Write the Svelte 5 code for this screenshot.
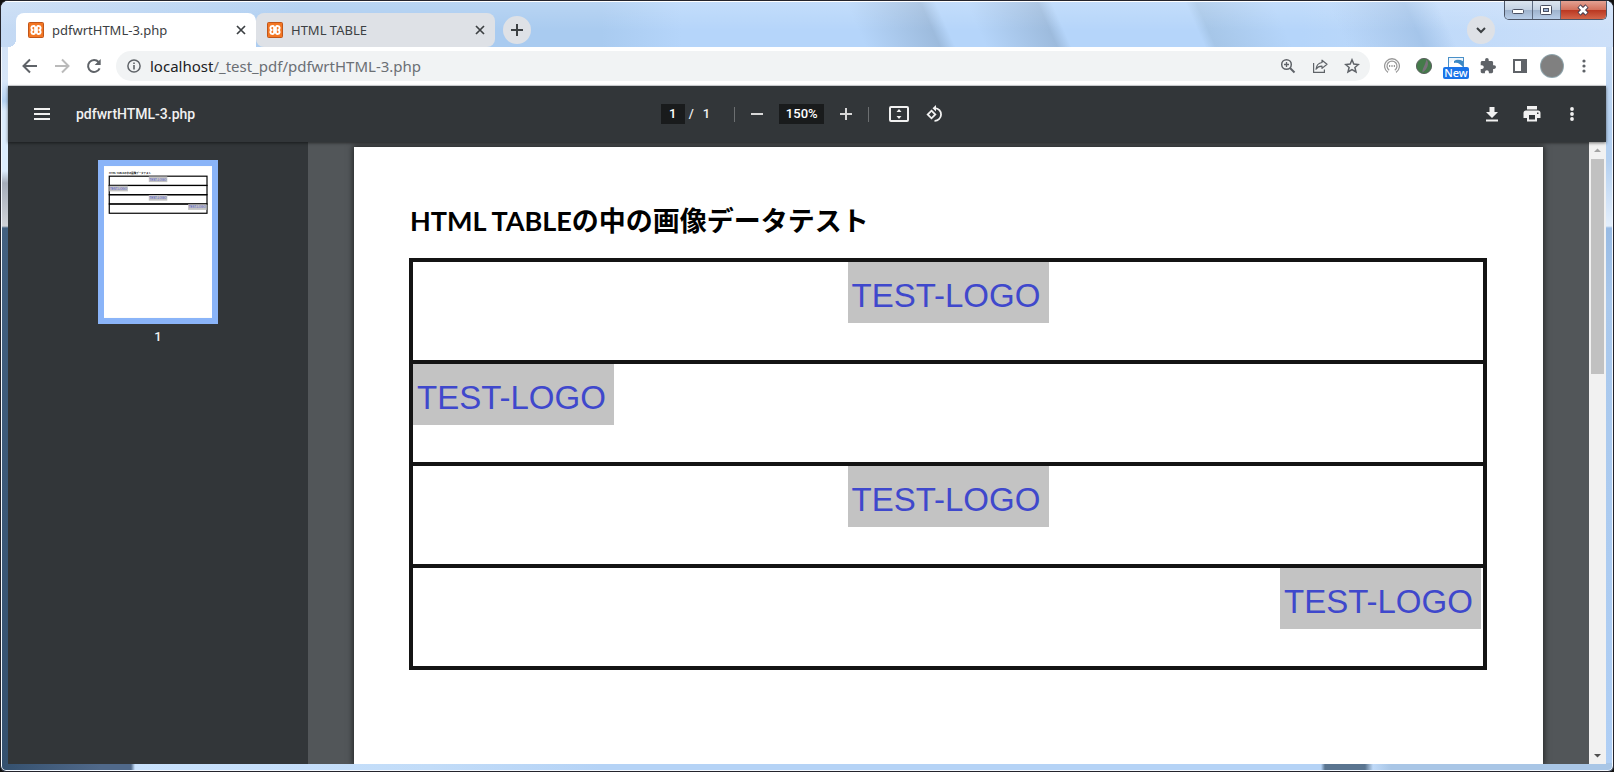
<script lang="ts">
	const tabs = [
		{ title: 'pdfwrtHTML-3.php', active: true },
		{ title: 'HTML TABLE', active: false }
	];
	const rows = ['center', 'left', 'center', 'right'];
	const heading = 'HTML TABLEの中の画像データテスト';
	const logo = 'TEST-LOGO';

	// logo offsets inside the page preview, in page units
	const previewX: Record<string, number> = { left: 59, center: 493, right: 926 };

	let page = $state('1');
	let zoom = $state('150%');
	let url = $state('localhost/_test_pdf/pdfwrtHTML-3.php');
</script>

<div class="window">
	<header class="titlebar">
		<div class="tabs">
			{#each tabs as tab}
				<div class="tab" class:active={tab.active}>
					<svg class="favicon" viewBox="0 0 16 16" aria-hidden="true">
						<rect x="0.5" y="0.5" width="15" height="15" rx="1" fill="#f37623" stroke="#c0561a" />
						<path
							d="M5.7 4C3 4 2.600 6.800 4.500 8C2.600 9.200 3 12 5.700 12C7.300 12 7.100 10.500 7.100 9H8.900C8.900 10.500 8.700 12 10.300 12C13 12 13.400 9.200 11.500 8C13.400 6.800 13 4 10.300 4C8.700 4 8.900 5.500 8.900 7H7.100C7.100 5.500 7.300 4 5.700 4Z"
							fill="none"
							stroke="#fff"
							stroke-width="1.9"
						/>
					</svg>
					<span class="tab-title">{tab.title}</span>
					<button class="tab-close" aria-label="Close tab">
						<svg viewBox="0 0 10 10"><path d="M1 1L9 9M9 1L1 9" stroke="#3c4043" stroke-width="1.7" /></svg>
					</button>
				</div>
			{/each}
		</div>
		<button class="round" aria-label="New tab">
			<svg width="14" height="14" viewBox="0 0 14 14"><path d="M7 1V13M1 7H13" stroke="#3c4043" stroke-width="2" /></svg>
		</button>
		<button class="round search" aria-label="Search tabs">
			<svg width="12" height="12" viewBox="0 0 12 12"><path d="M2 4L6 8L10 4" fill="none" stroke="#3c4043" stroke-width="2" /></svg>
		</button>
		<div class="controls">
			<button class="min" aria-label="Minimize">
				<svg width="14" height="14" viewBox="0 0 14 14"><rect x="1.5" y="6.5" width="11" height="4" rx="1" fill="#fff" stroke="#4a5063" /></svg>
			</button>
			<button class="max" aria-label="Maximize">
				<svg width="14" height="14" viewBox="0 0 14 14">
					<rect x="1.5" y="2.5" width="11" height="9" rx="1" fill="#fff" stroke="#4a5063" />
					<rect x="4.5" y="5.5" width="5" height="3" fill="#9db4d6" stroke="#4a5063" />
				</svg>
			</button>
			<button class="quit" aria-label="Close">
				<svg width="14" height="14" viewBox="0 0 14 14">
					<path d="M3 3L11 11M11 3L3 11" stroke="#4a3f50" stroke-width="4.6" />
					<path d="M3.5 3.5L10.5 10.5M10.5 3.5L3.5 10.5" stroke="#fff" stroke-width="2.6" />
				</svg>
			</button>
		</div>
	</header>

	<div class="toolbar">
		<button class="nav" aria-label="Back">
			<svg viewBox="0 0 16 16"><path d="M15 8H2M8 1.5L1.5 8L8 14.5" fill="none" stroke="#5f6368" stroke-width="2" /></svg>
		</button>
		<button class="nav" aria-label="Forward" disabled>
			<svg viewBox="0 0 16 16"><path d="M1 8H14M8 1.5L14.5 8L8 14.5" fill="none" stroke="#bababa" stroke-width="2" /></svg>
		</button>
		<button class="nav" aria-label="Reload">
			<svg viewBox="0 0 16 16">
				<path d="M13.6 10.3A6 6 0 1 1 12.6 4" fill="none" stroke="#5f6368" stroke-width="2" />
				<path d="M14.7 1V7H8.7Z" fill="#5f6368" />
			</svg>
		</button>
		<div class="omnibox">
			<svg class="info" viewBox="0 0 14 14" aria-hidden="true">
				<circle cx="7" cy="7" r="6.1" fill="none" stroke="#5f6368" stroke-width="1.5" />
				<path d="M7 6V10.5M7 3.5V5" stroke="#5f6368" stroke-width="1.6" />
			</svg>
			<div class="url">
				<span class="url-text" aria-hidden="true"><b>localhost</b>{url.slice(9)}</span>
				<input aria-label="Address" bind:value={url} />
			</div>
			<button class="act" aria-label="Zoom">
				<svg viewBox="0 0 16 16" fill="none" stroke="#5f6368">
					<circle cx="6.5" cy="6.5" r="4.8" stroke-width="1.5" />
					<path d="M10 10L14.5 14.5" stroke-width="2" />
					<path d="M6.5 4V9M4 6.5H9" stroke-width="1.3" />
				</svg>
			</button>
			<button class="act" aria-label="Share">
				<svg viewBox="0 0 16 16" fill="none" stroke="#5f6368" stroke-width="1.2">
					<path d="M1.6 5V14.4H12.4V11.5" />
					<path d="M10 2.2L15 6.3L10 10.4V8.2C7 8.2 5.3 9.2 4 11.2C4.4 7.6 6.3 5 10 4.5Z" stroke-linejoin="round" />
				</svg>
			</button>
			<button class="act" aria-label="Bookmark">
				<svg viewBox="0 0 16 16"><path d="M8 1.8L9.8 6.1L14.4 6.5L10.9 9.5L12 14L8 11.6L4 14L5.1 9.5L1.6 6.5L6.2 6.1Z" fill="none" stroke="#5f6368" stroke-width="1.5" /></svg>
			</button>
		</div>
		<div class="extensions">
			<button aria-label="Broadcast">
				<svg viewBox="0 0 16 16" fill="none" stroke="#999">
					<path d="M4 14.4A7.4 7.4 0 1 1 12 14.4" stroke-width="1.3" />
					<path d="M5.2 12.2A5 5 0 1 1 10.8 12.2" stroke-width="1.3" />
					<path d="M5 8H6.2M7.4 8H8.6M9.8 8H11" stroke="#777" stroke-width="1.3" />
				</svg>
			</button>
			<button aria-label="Feather">
				<svg viewBox="0 0 16 16">
					<circle cx="8" cy="8" r="7.6" fill="#447a4a" stroke="#5d6461" />
					<path d="M10.5 1.5C14 5 11 12 6.5 14.5C6 11 8.5 9 10.5 1.5Z" fill="#77707a" />
				</svg>
			</button>
			<button class="new-ext" aria-label="New extension">
				<svg viewBox="0 0 16 11">
					<rect x="0.5" y="0.5" width="15" height="10" fill="#fff" stroke="#4a90c8" />
					<path d="M1 1H15V3H6L2 6H1Z" fill="#eef5fb" />
					<path d="M6 4C9 2 12 3 15 4V10C12 7 10 5 6 6Z" fill="#3c88c4" />
				</svg>
				<span class="badge">New</span>
			</button>
			<button aria-label="Extensions">
				<svg viewBox="1 1 22 22"><path d="M20.5 11H19V7c0-1.1-.9-2-2-2h-4V3.500a2.500 2.500 0 0 0-5 0V5H4c-1.100 0-2 .9-2 2v3.800h1.500c1.500 0 2.700 1.200 2.700 2.700S5 16.200 3.500 16.200H2V20c0 1.100.9 2 2 2h3.800v-1.500c0-1.500 1.200-2.700 2.700-2.700s2.700 1.200 2.700 2.700V22H17c1.100 0 2-.9 2-2v-4h1.500a2.500 2.500 0 0 0 0-5z" fill="#5f6368" /></svg>
			</button>
			<button aria-label="Side panel">
				<svg viewBox="0 0 16 16"><path d="M1 1H15V15H1ZM3 3V13H9V3Z" fill="#5f6368" fill-rule="evenodd" /></svg>
			</button>
			<button class="avatar" aria-label="Profile"></button>
			<button aria-label="Menu">
				<svg viewBox="0 0 16 16" fill="#5f6368"><circle cx="8" cy="3" r="1.600" /><circle cx="8" cy="8" r="1.600" /><circle cx="8" cy="13" r="1.600" /></svg>
			</button>
		</div>
	</div>

	<div class="pdfbar">
		<div class="pdf-start">
			<button aria-label="Menu">
				<svg width="16" height="12" viewBox="0 0 16 12"><path d="M0 1H16M0 6H16M0 11H16" stroke="#f1f1f1" stroke-width="2" /></svg>
			</button>
			<span class="doc-title">pdfwrtHTML-3.php</span>
		</div>
		<div class="pdf-center">
			<input class="page-input" aria-label="Page number" bind:value={page} />
			<span class="slash">/</span>
			<span class="total">1</span>
			<span class="divider"></span>
			<button class="minus" aria-label="Zoom out">
				<svg width="12" height="12" viewBox="0 0 12 12"><path d="M0 6H12" stroke="#d8d8d8" stroke-width="2" /></svg>
			</button>
			<input class="zoom-input" aria-label="Zoom level" bind:value={zoom} />
			<button class="plus" aria-label="Zoom in">
				<svg width="12" height="12" viewBox="0 0 12 12"><path d="M0 6H12M6 0V12" stroke="#d8d8d8" stroke-width="2" /></svg>
			</button>
			<span class="divider"></span>
			<button class="fit" aria-label="Fit to page">
				<svg width="20" height="16" viewBox="0 0 20 16">
					<rect x="1" y="1" width="18" height="14" rx="1" fill="none" stroke="#f1f1f1" stroke-width="2" />
					<path d="M10 3L12.500 6H7.500ZM10 13L12.500 10H7.500Z" fill="#f1f1f1" />
				</svg>
			</button>
			<button aria-label="Rotate">
				<svg width="18" height="18" viewBox="0 0 18 18" fill="none" stroke="#f1f1f1" stroke-width="1.800">
					<path d="M5.500 5.700L9.300 9.500L5.500 13.300L1.700 9.500Z" />
					<path d="M9 3.200A6.300 6.300 0 1 1 8.500 15.800" />
					<path d="M10 0V6.400L6.500 3.200Z" fill="#f1f1f1" stroke="none" />
				</svg>
			</button>
		</div>
		<div class="pdf-end">
			<button aria-label="Download">
				<svg width="14" height="16" viewBox="0 0 14 16"><path d="M4.500 1H9.500V6H13L7 12L1 6H4.500ZM1 13.500H13V15.500H1Z" fill="#f1f1f1" /></svg>
			</button>
			<button aria-label="Print">
				<svg width="18" height="16" viewBox="0 0 18 16">
					<path d="M4 0H14V3.500H4ZM3 4.500H15A2.500 2.500 0 0 1 17.500 7V12H14V15.500H4V12H0.500V7A2.500 2.500 0 0 1 3 4.500ZM6 9V13.500H12V9ZM14 6.500V8H15.500V6.500Z" fill="#f1f1f1" fill-rule="evenodd" />
				</svg>
			</button>
			<button aria-label="More actions">
				<svg width="14" height="16" viewBox="0 0 14 16" fill="#f1f1f1"><circle cx="7" cy="3" r="1.900" /><circle cx="7" cy="8" r="1.900" /><circle cx="7" cy="13" r="1.900" /></svg>
			</button>
		</div>
	</div>

	<div class="viewer">
		<aside class="sidebar">
			<button class="thumb" aria-label="Page 1">
				<svg viewBox="0 0 1189 1673">
					<rect width="1189" height="1673" fill="#fff" />
					<text class="preview-heading" x="56" y="84">{heading}</text>
					{#each rows as align, i}
						<rect x="58" y={112 + i * 102} width="1076" height="102" fill="none" stroke="#000" stroke-width="13" />
					{/each}
					{#each rows as align, i}
						<rect x={previewX[align]} y={115 + i * 102} width="204" height="62" fill="#c3c3c3" />
						<text class="preview-logo" x={previewX[align] + 6} y={160 + i * 102}>{logo}</text>
					{/each}
				</svg>
			</button>
			<span class="thumb-label">1</span>
		</aside>
		<main class="canvas">
			<article class="page">
				<h1>{heading}</h1>
				<table>
					<tbody>
						{#each rows as align}
							<tr>
								<td class={align}><span class="logo">{logo}</span></td>
							</tr>
						{/each}
					</tbody>
				</table>
			</article>
		</main>
		<div class="scrollbar">
			<svg width="17" height="17" viewBox="0 0 17 17"><path d="M5 10L8.500 6.500L12 10Z" fill="#a3a3a3" /></svg>
			<div class="scroll-thumb"></div>
			<svg class="down" width="17" height="17" viewBox="0 0 17 17"><path d="M5 7L8.500 10.500L12 7Z" fill="#505050" /></svg>
		</div>
	</div>
</div>

<style>
	:global(body) {
		background: #111;
	}

	.window {
		display: flex;
		flex-direction: column;
		height: 100vh;
		box-sizing: border-box;
		padding: 0 6px 6px;
		border: 1px solid #24242c;
		border-radius: 8px 8px 6px 6px;
		box-shadow: inset 0 0 0 1px #f4f9ff;
		overflow: hidden;
		background:
			linear-gradient(90deg, #34506e 0, #50698a 100px, #50698a 130px, #c9e2fd 134px, #c2dcf8 430px, transparent 600px) bottom / 100% 8px no-repeat,
			linear-gradient(90deg, transparent 1320px, #5a7590 1324px, #5a7590 1364px, #c0daf8 1372px, #a9c6e6 1390px) bottom / 100% 8px no-repeat,
			linear-gradient(180deg, #cfe0f6 0, #d8e6f8 80px, #b5d2f2 100px, #dcecfc 110px, #dcecfc 170px, #a5adba 182px, #d0d3d8 225px, #426080 227px, #34506e 100%) left / 8px 100% no-repeat,
			linear-gradient(180deg, #d4e5fa 0, #b4d0f0 130px, #b4d0f0 160px, #e4effc 225px, #98bbe4 227px, #a9c8ec 300px, #b0cff5 100%) right / 8px 100% no-repeat,
			#b5d3f6;
		font-family: 'Noto Sans', sans-serif;
	}

	button {
		display: flex;
		align-items: center;
		justify-content: center;
		padding: 0;
		border: 0;
		background: none;
	}

	input {
		box-sizing: border-box;
		min-width: 0;
		padding: 0;
		border: 0;
		outline: 0;
	}

	.titlebar {
		display: flex;
		flex: none;
		height: 46px;
		margin: 0 -6px;
		padding: 0 6px 0 7px;
		background:
			linear-gradient(180deg, #fff 1px, #ffffff30 1px, transparent 30px),
			linear-gradient(66deg, transparent 790px, #9dbbdd 858px, transparent 872px, transparent 900px, #9dbbdd 965px, transparent 978px, transparent 1100px, #a6c6e8 1110px, transparent 1180px, transparent 1230px, #a5c5ea 1300px, transparent 1330px),
			linear-gradient(90deg, #c5daf4 0, #a9cbf0 300px, #a9cbf0 600px, #b5d5fa 680px, #b5d5fa 1300px, #cde0f9 100%);
	}

	.tabs {
		display: flex;
		align-items: flex-end;
		padding-left: 8px;
	}

	.tab {
		display: flex;
		align-items: center;
		box-sizing: border-box;
		width: 239px;
		height: 34px;
		padding: 0 10px 0 12px;
		border-radius: 8px;
		background: #dee1e6;
	}

	.tab:not(.active) {
		padding-left: 11px;
	}

	.tab.active {
		position: relative;
		width: 240px;
		border-radius: 8px 8px 0 0;
		background: #fff;
	}

	.tab.active::before {
		content: '';
		position: absolute;
		left: -8px;
		bottom: 0;
		width: 8px;
		height: 8px;
		background: radial-gradient(circle at 0 0, transparent 8px, #fff 8px);
	}

	.favicon {
		width: 16px;
		height: 16px;
		margin-right: 8px;
	}

	.tab-title {
		flex: 1;
		font-size: 13px;
		line-height: 16px;
		color: #3c4043;
	}

	.tab-close {
		width: 10px;
		height: 10px;
	}

	.tab-close svg {
		width: 10px;
		height: 10px;
	}

	.round {
		width: 28px;
		height: 28px;
		margin: 15px 0 0 8px;
		border-radius: 50%;
		background: #dee1e6;
	}

	.search {
		margin-left: auto;
	}

	.controls {
		display: flex;
		box-sizing: border-box;
		width: 103px;
		height: 19px;
		margin-left: 9px;
		border: 1px solid #4c5566;
		border-top: 0;
		border-radius: 0 0 5px 5px;
		overflow: hidden;
	}

	.controls button {
		height: 18px;
		background: linear-gradient(180deg, #dce5f0, #c2d0e2 50%, #9eb2cc 50%, #b8cde8);
	}

	.controls .min,
	.controls .max {
		flex: 28;
		border-right: 1px solid #5d6a80;
	}

	.controls .quit {
		flex: 47;
		background: linear-gradient(180deg, #e3a293, #d3705b 50%, #b93620 50%, #d4664a);
	}

	.toolbar {
		display: flex;
		align-items: center;
		flex: none;
		height: 39px;
		box-sizing: border-box;
		margin: 0 1px;
		padding: 0 14px;
		border-bottom: 1px solid #dadce0;
		background: #fff;
	}

	.nav {
		width: 16px;
		margin-right: 16px;
	}

	.nav svg {
		width: 16px;
		height: 16px;
	}

	.omnibox {
		display: flex;
		align-items: center;
		flex: 1;
		height: 30px;
		margin-left: -2px;
		padding: 0 10px 0 11px;
		border-radius: 15px;
		background: #f1f3f4;
	}

	.info {
		width: 14px;
		height: 14px;
		margin-right: 9px;
	}

	.url {
		display: grid;
		flex: 1;
		font-size: 15px;
		line-height: 20px;
	}

	.url > * {
		grid-area: 1 / 1;
	}

	.url-text {
		color: #6b6f74;
	}

	.url b {
		font-weight: 400;
		color: #202124;
	}

	.url input {
		background: none;
		font: inherit;
		color: transparent;
		caret-color: #202124;
	}

	.act {
		margin-left: 16px;
	}

	.act svg {
		width: 16px;
		height: 16px;
	}

	.extensions {
		display: flex;
		align-items: center;
		gap: 16px;
		margin-left: 14px;
	}

	.extensions svg {
		width: 16px;
		height: 16px;
	}

	.new-ext {
		position: relative;
	}

	.extensions .new-ext svg {
		height: 11px;
		margin-bottom: 7px;
	}

	.badge {
		position: absolute;
		top: 10px;
		left: -5px;
		width: 26px;
		border-radius: 2px;
		background: #1a73e8;
		color: #fff;
		font: 500 11px/12px 'Noto Sans', sans-serif;
	}

	.avatar {
		width: 22px;
		height: 22px;
		margin: 0 -3px;
		border-radius: 50%;
		background: #808080;
		box-shadow: 0 0 0 1px #8fa5ad;
	}

	.pdfbar {
		display: grid;
		grid-template-columns: 1fr auto 1fr;
		align-items: center;
		flex: none;
		height: 56px;
		margin: 0 1px;
		background: #323639;
		box-shadow: 0 1px 3px #0008;
		color: #f1f1f1;
		font: 500 14px/20px Roboto, sans-serif;
		z-index: 1;
	}

	.pdf-start,
	.pdf-center,
	.pdf-end {
		display: flex;
		align-items: center;
	}

	.pdf-start {
		gap: 26px;
		padding-left: 26px;
	}

	.pdf-center {
		padding-right: 9px;
	}

	.pdf-end {
		justify-content: flex-end;
		gap: 24px;
		padding-right: 27px;
	}

	.page-input,
	.zoom-input {
		height: 20px;
		background: #191b1c;
		color: #fff;
		font: 500 13px/20px Roboto, sans-serif;
		text-align: center;
	}

	.page-input {
		width: 24px;
	}

	.zoom-input {
		width: 45px;
	}

	.slash {
		margin: 0 9px 0 4px;
		font-size: 13px;
	}

	.total {
		font-size: 13px;
	}

	.divider {
		width: 1px;
		height: 15px;
		margin: 0 16px 0 24px;
		background: #6c6f71;
	}

	.minus {
		margin-right: 16px;
	}

	.plus {
		margin-left: 16px;
	}

	.plus + .divider {
		margin: 0 20px 0 16px;
	}

	.fit {
		margin-right: 17px;
	}

	.viewer {
		display: flex;
		flex: 1;
		min-height: 0;
		margin: 0 1px 1px;
		background: #525659;
	}

	.sidebar {
		display: flex;
		flex-direction: column;
		align-items: center;
		flex: none;
		width: 300px;
		box-sizing: border-box;
		padding-top: 18px;
		background: #323639;
	}

	.thumb {
		border: 6px solid #8ab4f8;
	}

	.thumb svg {
		width: 108px;
		height: 152px;
	}

	.preview-heading {
		font: 700 27px 'Noto Sans CJK JP', sans-serif;
	}

	.preview-logo {
		font: 400 33px 'Liberation Sans', sans-serif;
		fill: #3f48cc;
	}

	.thumb-label {
		margin-top: 4px;
		color: #f1f1f1;
		font: 500 13px/18px Roboto, sans-serif;
	}

	.canvas {
		flex: 1;
		min-width: 0;
		padding: 5px 46px 0;
		overflow: hidden;
	}

	.page {
		min-height: 100%;
		box-sizing: border-box;
		padding: 54px 56px 0 55px;
		background: #fff;
		box-shadow: 0 0 6px 1px #0009;
	}

	h1 {
		margin: 0 0 17px 1px;
		color: #000;
		font: 700 27px/40px Lato, 'Noto Sans CJK JP', sans-serif;
	}

	table {
		width: 100%;
		border-collapse: collapse;
	}

	td {
		height: 98px;
		padding: 0;
		border: 4px solid #141414;
		vertical-align: top;
	}

	.center {
		text-align: center;
	}

	.right {
		padding-right: 2px;
		text-align: right;
	}

	.logo {
		display: inline-block;
		box-sizing: border-box;
		width: 201px;
		height: 61px;
		padding-left: 4px;
		background: #c3c3c3;
		color: #3f48cc;
		font: 400 33px/68px 'Liberation Sans', sans-serif;
		text-align: left;
		vertical-align: top;
	}

	.scrollbar {
		display: flex;
		flex-direction: column;
		flex: none;
		width: 17px;
		background: #f1f1f1;
	}

	.scroll-thumb {
		height: 215px;
		margin: 0 2px;
		background: #c1c1c1;
	}

	.down {
		margin-top: auto;
	}
</style>
